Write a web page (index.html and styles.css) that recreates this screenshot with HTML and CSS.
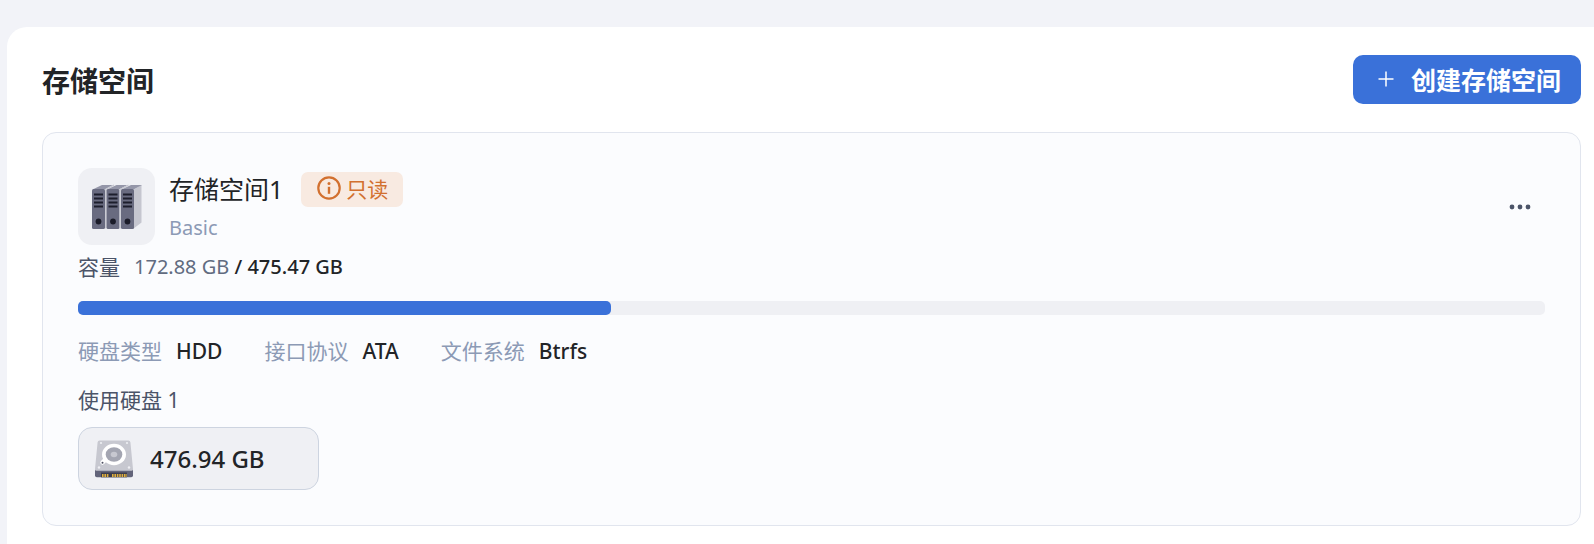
FILE: index.html
```html
<!DOCTYPE html>
<html lang="zh-CN">
<head>
  <meta charset="UTF-8" />
  <meta name="viewport" content="width=device-width,initial-scale=1.0" />
  <title>存储空间</title>
  <link rel="stylesheet" href="styles.css">
</head>
<body>
  <main class="panel">
    <header class="panel-head">
      <h1 class="panel-title">存储空间</h1>
      <button class="btn-create" type="button">
        <svg class="icon-plus" viewBox="0 0 16 16" aria-hidden="true">
          <path d="M8 0.500v15M0.500 8h15" />
        </svg>
        创建存储空间
      </button>
    </header>

    <section class="card">
      <div class="volume">
        <div class="volume-icon">
          <svg class="icon-server" viewBox="0 0 50 46" aria-hidden="true">
            <defs>
              <g id="bay">
                <path d="M0.500 5.500 10 1h11l-8.500 4.500z" fill="#9496a8" />
                <rect x="0" y="5" width="13" height="40" rx="1.500" fill="#696b80" />
                <path d="M2 10.500h9M2 14.500h9M2 18.500h9M2 22.500h9" stroke="#1d1e2c" stroke-width="2" />
                <circle cx="6.500" cy="37.500" r="2.900" fill="#1b1c29" />
              </g>
            </defs>
            <path d="M41 6 49.500 1v37.500L41 45z" fill="#c5c6cf" />
            <use href="#bay" />
            <path d="M13.700 5.500v39M13.500 5.500 22 1" stroke="#c5c6cf" stroke-width="1.200" />
            <use href="#bay" x="14.500" />
            <path d="M28.200 5.500v39M28 5.500 36.500 1" stroke="#c5c6cf" stroke-width="1.200" />
            <use href="#bay" x="29" />
          </svg>
        </div>
        <div class="volume-info">
          <div class="volume-name">
            <h2 class="name">存储空间1</h2>
            <span class="badge">
              <svg class="icon-info" viewBox="0 0 24 24" aria-hidden="true">
                <circle cx="12" cy="12" r="10.700" fill="none" stroke="currentColor" stroke-width="2.200" />
                <circle cx="12" cy="7.500" r="1.500" fill="currentColor" />
                <path d="M12 10.800v7" stroke="currentColor" stroke-width="2.400" />
              </svg>
              <span class="badge-text">只读</span>
            </span>
          </div>
          <div class="volume-mode">Basic</div>
        </div>
        <button class="btn-more" type="button" aria-label="更多">
          <svg class="icon-more" viewBox="0 0 22 6" aria-hidden="true">
            <circle cx="3" cy="3" r="2.400" />
            <circle cx="11" cy="3" r="2.400" />
            <circle cx="19" cy="3" r="2.400" />
          </svg>
        </button>
      </div>

      <div class="capacity">
        <span class="capacity-label">容量</span>
        <span class="num">172.88 GB <b class="total">/ 475.47 GB</b></span>
      </div>
      <div class="bar"><div class="bar-fill" style="width: 36.36%"></div></div>

      <dl class="props">
        <div class="prop"><dt>硬盘类型</dt><dd>HDD</dd></div>
        <div class="prop"><dt>接口协议</dt><dd>ATA</dd></div>
        <div class="prop"><dt>文件系统</dt><dd>Btrfs</dd></div>
      </dl>

      <div class="disks-label">使用硬盘 1</div>
      <div class="disk">
        <svg class="icon-disk" viewBox="0 0 38 38" aria-hidden="true">
          <path d="M0 29h38v6.500a1.800 1.800 0 0 1-1.800 1.800H1.800A1.800 1.800 0 0 1 0 35.500z" fill="#62647a" />
          <path d="M6 32.500h26v4.800H6z" fill="#3c3d4e" />
          <path d="M7 35.500h7M17 35.500h15" stroke="#e0b040" stroke-width="3" stroke-dasharray="1.600 0.800" />
          <path d="M4.600 0.500h28.800a2 2 0 0 1 2 1.800L38 29a1.500 1.500 0 0 1-1.500 1.700h-35A1.500 1.500 0 0 1 0 29L2.600 2.300a2 2 0 0 1 2-1.800z" fill="#c7c8d0" />
          <path d="M12 18 7.500 22.500" stroke="#fff" stroke-width="4.500" stroke-linecap="round" />
          <ellipse cx="19" cy="14.500" rx="12" ry="10.700" fill="#fff" />
          <ellipse cx="19" cy="14.500" rx="8.300" ry="7.300" fill="#a3a5b1" />
          <ellipse cx="19" cy="14.500" rx="3.300" ry="2.700" fill="#c7c8d0" />
          <circle cx="7.500" cy="22.700" r="1" fill="#4b4d60" />
          <g fill="#eeeff3">
            <circle cx="6" cy="3" r="1.100" />
            <circle cx="32" cy="3" r="1.100" />
            <circle cx="4" cy="27.500" r="1.200" />
            <circle cx="34" cy="27.500" r="1.200" />
          </g>
        </svg>
        <span class="disk-size">476.94 GB</span>
      </div>
    </section>
  </main>
</body>
</html>
```
FILE: styles.css
```css
* { margin: 0; padding: 0; box-sizing: border-box; }
body {
  min-height: 100vh;
  display: flex;
  padding: 27px 0 0 7px;
  background: #f2f3f8;
  color: #222427;
  font-family: "Noto Sans", "Noto Sans CJK SC", sans-serif;
  font-size: 21px;
  line-height: 28px;
}
button {
  border: none;
  background: none;
  font-family: inherit;
  cursor: pointer;
}
svg { display: block; flex: none; }
.panel {
  flex: 1;
  padding: 28px 13px 17px 35px;
  background: #fff;
  border-top-left-radius: 20px;
}
.panel-head {
  display: flex;
  justify-content: space-between;
  align-items: center;
  margin-bottom: 28px;
}
.panel-title {
  padding-top: 2px;
  font-size: 28px;
  line-height: 42px;
  font-weight: 700;
}
.btn-create {
  display: flex;
  align-items: center;
  gap: 17px;
  height: 49px;
  padding: 0 20px 2px 25px;
  border-radius: 10px;
  background: #3a71d9;
  color: #fff;
  font-size: 25px;
  font-weight: 700;
}
.icon-plus {
  width: 16px;
  height: 16px;
  fill: none;
  stroke: currentColor;
  stroke-width: 1.5;
}
.card {
  padding: 35px;
  border: 1px solid #e1e5ee;
  border-radius: 14px;
  background: #fbfcfe;
}
.volume {
  display: flex;
  align-items: center;
  gap: 14px;
  margin-bottom: 8px;
}
.volume-icon {
  display: flex;
  align-items: center;
  justify-content: center;
  width: 77px;
  height: 77px;
  border-radius: 14px;
  background: #eff0f4;
}
.icon-server { width: 50px; height: 46px; }
.volume-info { flex: 1; }
.volume-name {
  display: flex;
  align-items: center;
  gap: 18px;
  margin-bottom: 7px;
}
.name {
  font-size: 25px;
  line-height: 35px;
  font-weight: 400;
}
.badge {
  display: flex;
  align-items: center;
  gap: 5px;
  height: 35px;
  padding: 0 15px 2px 16px;
  border-radius: 7px;
  background: #f8eae1;
  color: #d2702f;
}
.badge-text { padding-top: 2px; }
.icon-info { width: 24px; height: 24px; }
.volume-mode { font-size: 20px; color: #8c9ab5; }
.btn-more { padding: 10px 14px; }
.icon-more { width: 22px; height: 6px; fill: #4b5468; }
.capacity {
  display: flex;
  gap: 14px;
  margin-bottom: 20px;
  color: #4b5468;
}
.num { font-size: 20px; color: #616b80; }
.total { color: #222427; font-weight: 500; }
.bar {
  height: 14px;
  border-radius: 5px;
  background: #eff0f4;
}
.bar-fill {
  height: 100%;
  border-radius: 5px;
  background: #3a71d9;
}
.props {
  display: flex;
  gap: 42px;
  margin: 22px 0 21px;
}
.prop { display: flex; gap: 14px; }
.prop dt { color: #8c9ab5; }
.prop dd { font-weight: 500; }
.disks-label {
  margin-bottom: 13px;
  color: #4b5468;
}
.disk {
  display: flex;
  align-items: center;
  gap: 17px;
  width: 241px;
  height: 63px;
  padding: 0 16px;
  border: 1px solid #cdd4e0;
  border-radius: 14px;
  background: #eff0f4;
}
.icon-disk { width: 38px; height: 38px; }
.disk-size { font-size: 24px; font-weight: 500; }
```
